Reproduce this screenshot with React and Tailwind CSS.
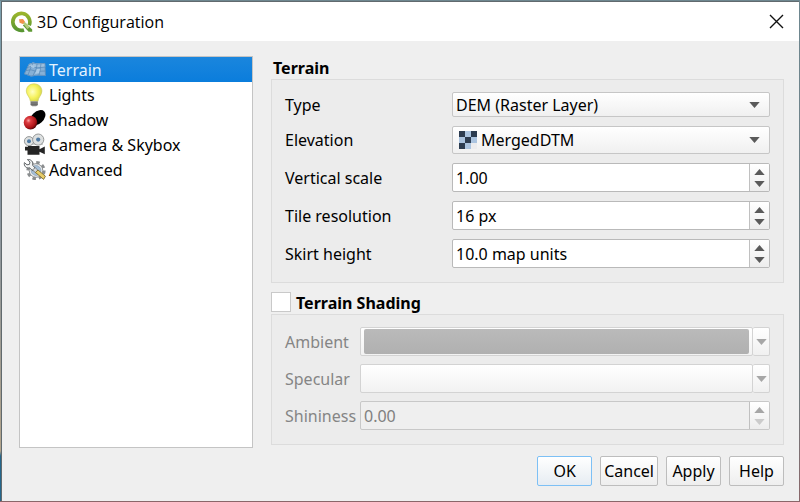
import React, { useState } from "react";

const FIELD =
  "rounded-[2px] border border-[#c6c6c6] bg-linear-to-b from-white to-[#f0f0f0]";

function QgisLogo() {
  return (
    <svg width="22" height="22" viewBox="0 0 22 22" aria-hidden="true">
      <defs>
        <linearGradient id="ring" x1="0" y1="0" x2="0" y2="1">
          <stop offset="0" stopColor="#9ab52c" />
          <stop offset="1" stopColor="#589632" />
        </linearGradient>
      </defs>
      <path
        d="M18.200 14.200 A8.500 8.500 0 1 0 13 19"
        fill="none"
        stroke="url(#ring)"
        strokeWidth="3.700"
      />
      <path d="M11.800 14.200 L15 12.600 L21.200 18.400 V20.800 H17.600 Z" fill="#5f9a35" />
      <path d="M11.800 12.200 L13.600 10.800 L18.800 16 L16.400 18 Z" fill="#b4cb7c" />
      <path d="M8 8.200 L12 8 L14 10.800 L11.800 13 L8.600 11.800 Z" fill="#f0924a" />
    </svg>
  );
}

function TerrainIcon() {
  return (
    <svg width="24" height="24" viewBox="0 0 24 24" aria-hidden="true">
      <path d="M6 6 L10 4.6 L14 5.4 L22 5 L22.6 18 L15 17.4 L8 18.6 L1 16 Z" fill="#86b0d6" />
      <path d="M6 6 L10 4.6 L14 5.4 L22 5 L22.3 9 L4.5 9 Z" fill="#9cc0de" />
      <path
        d="M6 6.4 L10 5 L14 6 L22 5.4 M4.4 9.4 L9 8.2 L14 10 L22 9 M2.8 12.6 L8 11.8 L13 13.4 L22.4 13 M1.4 15.8 L8 18 L15 17 L22.4 17.6 M10 5 L7 11.6 L5 17 M14 6 L13.5 10 L10 17.6 M18 5.6 L17 13 L16 17 M6 6.4 L1.4 15.8 M22 5.4 L22.4 17.6"
        fill="none"
        stroke="#5888b6"
        strokeWidth=".7"
      />
      <path d="M8 7 L12 8 L11 10 L8 9 Z M14 11 L17 11 L16 15 L12 16 Z" fill="#a9c9e5" />
    </svg>
  );
}

function BulbIcon() {
  return (
    <svg width="24" height="24" viewBox="0 0 24 24" aria-hidden="true">
      <defs>
        <radialGradient id="glass" cx=".4" cy=".45" r=".6">
          <stop offset="0" stopColor="#ffffc4" />
          <stop offset=".6" stopColor="#f6f25c" />
          <stop offset="1" stopColor="#d8d84c" />
        </radialGradient>
      </defs>
      <path
        d="M11 .8 C6.400 .8 3.300 4 3.300 8 C3.300 12 7 14 7.400 18.300 H15 C15.400 14 18.900 12 18.900 8 C18.900 4 15.600 .8 11 .8 Z"
        fill="url(#glass)"
        stroke="#c9c95e"
        strokeWidth=".6"
      />
      <path d="M7.600 18.300 H14.800 V22 L13.200 23.200 H9.200 L7.600 22 Z" fill="#8b8b88" />
      <path d="M7.600 20 H14.800 M7.600 21.700 H14.800" stroke="#555" strokeWidth=".7" />
    </svg>
  );
}

function ShadowIcon() {
  return (
    <svg width="24" height="24" viewBox="0 0 24 24" aria-hidden="true">
      <defs>
        <radialGradient id="ball" cx=".35" cy=".35" r=".7">
          <stop offset="0" stopColor="#f9a0a0" />
          <stop offset=".25" stopColor="#dc3c40" />
          <stop offset=".75" stopColor="#ae1519" />
          <stop offset="1" stopColor="#4e0507" />
        </radialGradient>
      </defs>
      <ellipse cx="14.500" cy="9.800" rx="9.300" ry="6" transform="rotate(-43 14.500 9.800)" fill="#000" />
      <circle cx="7.500" cy="14.600" r="6.800" fill="url(#ball)" />
    </svg>
  );
}

function CameraIcon() {
  return (
    <svg width="24" height="24" viewBox="0 0 24 24" aria-hidden="true">
      <path d="M3 10.500 L5 8 L10 7 L20 7 L20 12 H4 Z" fill="#cfd2d2" />
      <circle cx="6" cy="8.200" r="4.600" fill="#dde0e0" stroke="#8c8f8f" strokeWidth=".9" />
      <circle cx="15.200" cy="6.600" r="5.600" fill="#dde0e0" stroke="#8c8f8f" strokeWidth=".9" />
      <circle cx="6" cy="8.200" r="2" fill="#4f7ba5" />
      <circle cx="15.200" cy="6.600" r="2.100" fill="#4f7ba5" />
      <path d="M2 13.800 H5 V13 H16.500 V16.200 L21.800 13.600 V21.200 L16.500 18.800 V21.800 H4.500 V17.500 H2 Z" fill="#252525" />
    </svg>
  );
}

function ToolsIcon() {
  return (
    <svg width="24" height="24" viewBox="0 0 24 24" aria-hidden="true">
      <circle cx="13" cy="12.500" r="8" fill="none" stroke="#8a8d8f" strokeWidth="3.200" strokeDasharray="3.400 2.880" />
      <circle cx="13" cy="12.500" r="6.800" fill="#f4f5f5" stroke="#8b8e90" strokeWidth="1" />
      <circle cx="13" cy="12.500" r="5" fill="#a6c0d8" stroke="#8296aa" strokeWidth=".6" />
      <path
        d="M4.400 1.600 L7 4 L6.400 6.400 L4 6.800 L1.400 4.600 C.6 8 3.200 10.600 6.600 9.800 L10 13 L12.600 10.600 L9.600 7.200 C10.600 4 8 .9 4.400 1.600 Z"
        fill="#f3f4f4"
        stroke="#64686b"
        strokeWidth="1"
      />
      <path d="M9.400 11.800 L12.400 9.800 L15 12.400 L12.600 14.800 Z" fill="#d5d8da" stroke="#72767a" strokeWidth=".8" />
      <path d="M12.400 14.400 L15 12 L22.400 18.200 L20.600 21.400 Z" fill="#e8cd6a" stroke="#7e6c2c" strokeWidth=".9" />
    </svg>
  );
}

function RasterIcon() {
  return (
    <svg width="18" height="18" viewBox="0 0 3 3" shapeRendering="crispEdges" aria-hidden="true">
      <path d="M0 0H3V3H0Z" fill="#abc4e0" />
      <path d="M0 0H1V1H0Z M2 0H3V1H2Z M1 1H2V2H1Z M0 2H1V3H0Z" fill="#2c3c50" />
      <path d="M2 2H3V3H2Z" fill="#ececee" />
    </svg>
  );
}

function Arrow({ up = false, className = "text-[#5a5a5a]" }) {
  return (
    <svg width="11" height="6" viewBox="0 0 11 6" className={className} aria-hidden="true">
      <path d={up ? "M.3 6 L5.500 0 L10.700 6 Z" : "M.3 0 H10.700 L5.500 6 Z"} fill="currentColor" />
    </svg>
  );
}

function Row({ id, label, wide = false, disabled = false, children }) {
  return (
    <div className="flex items-center">
      <label
        htmlFor={id}
        className={`shrink-0 ${wide ? "w-[167px]" : "w-[75px]"} ${disabled ? "text-[#858585]" : ""}`}
      >
        {label}
      </label>
      <div className="min-w-0 flex-1">{children}</div>
    </div>
  );
}

function Combo({ id, option, icon, className }) {
  return (
    <div className="relative">
      <select
        id={id}
        className={`block w-full appearance-none outline-none ${FIELD} ${className}`}
      >
        <option>{option}</option>
      </select>
      {icon && (
        <span className="pointer-events-none absolute inset-y-0 left-[7px] flex items-center">{icon}</span>
      )}
      <span className="pointer-events-none absolute inset-y-0 right-[10px] flex items-center">
        <Arrow />
      </span>
    </div>
  );
}

function SpinBox({ id, initial, disabled = false }) {
  const [value, setValue] = useState(initial);
  return (
    <div
      className={`flex h-[29px] overflow-hidden rounded-[2px] border ${
        disabled ? "border-[#c8c8c8] bg-[#efefef]" : "border-[#b9b9b9] bg-white"
      }`}
    >
      <input
        id={id}
        type="text"
        value={value}
        disabled={disabled}
        onChange={(e) => setValue(e.target.value)}
        className="min-w-0 flex-1 bg-transparent px-[3px] outline-none disabled:text-[#808080]"
      />
      <div className="flex w-5 flex-col border-l border-[#c0c0c0] bg-linear-to-b from-white to-[#ededed]">
        <button type="button" disabled={disabled} aria-label="Increase" className="flex flex-1 items-end justify-center pb-[3px]">
          <Arrow up className={disabled ? "text-[#a6a6a6]" : "text-[#5a5a5a]"} />
        </button>
        <button type="button" disabled={disabled} aria-label="Decrease" className="flex flex-1 items-start justify-center pt-[3px]">
          <Arrow className={disabled ? "text-[#cbcbcb]" : "text-[#5a5a5a]"} />
        </button>
      </div>
    </div>
  );
}

function ColorButton({ id, color }) {
  return (
    <div className="flex h-[29px]">
      <button
        id={id}
        type="button"
        disabled
        className="min-w-0 flex-1 rounded-[2px] border border-[#d3d3d3] bg-linear-to-b from-white to-[#f2f2f2] py-px pr-[3px] pl-[3px]"
      >
        <span className={`block h-full rounded-[2px] ${color}`} />
      </button>
      <button
        type="button"
        disabled
        aria-label="Color options"
        className="flex w-[17px] items-center justify-center rounded-[2px] border border-l-0 border-[#d3d3d3] bg-linear-to-b from-white to-[#f0f0f0]"
      >
        <Arrow className="text-[#a6a6a6]" />
      </button>
    </div>
  );
}

const PAGES = [
  ["Terrain", TerrainIcon],
  ["Lights", BulbIcon],
  ["Shadow", ShadowIcon],
  ["Camera & Skybox", CameraIcon],
  ["Advanced", ToolsIcon],
];

const BUTTON =
  "h-[30px] min-w-[55px] rounded-[2px] border bg-linear-to-b from-white px-[3px] text-center";

export default function App() {
  const [page, setPage] = useState("Terrain");
  return (
    <div className="flex min-h-screen bg-[linear-gradient(to_bottom,#6e8790_0,#727b7e_80%,#8a6669_100%)] pt-px pr-px pb-px font-['Noto_Sans',sans-serif] text-[16px] leading-[22px] text-black">
      <div className="w-px bg-[linear-gradient(to_bottom,#7ba0ae_0%,#8794a0_40%,#b3a48b_90%,#25678c_91%,#25678c_100%)]" />
      <main className="flex min-w-0 flex-1 flex-col border-t border-l border-[#616a6e] bg-[#efefef]">
        <header className="flex h-[39px] items-center bg-white pr-[15px] pl-[9px] font-['Open_Sans',sans-serif]">
          <QgisLogo />
          <h1 className="ml-1 flex-1">3D Configuration</h1>
          <button type="button" aria-label="Close">
            <svg width="15" height="15" viewBox="0 0 15 15" aria-hidden="true">
              <path d="M1 1 L14 14 M14 1 L1 14" stroke="#111" strokeWidth="1.400" />
            </svg>
          </button>
        </header>

        <div className="flex flex-1 gap-[18px] pt-[15px] pr-[15px] pl-[17px]">
          <nav className="w-[234px] shrink-0 border border-[#c4c4c4] bg-white">
            <ul>
              {PAGES.map(([name, Icon]) => (
                <li key={name}>
                  <button
                    type="button"
                    onClick={() => setPage(name)}
                    className={`flex h-[25px] w-full items-center gap-0.5 pl-[3px] text-left ${
                      page === name ? "bg-linear-to-b from-[#1a86dd] to-[#0a7ddc] text-[#e4f3ff]" : ""
                    }`}
                  >
                    <Icon />
                    {name}
                  </button>
                </li>
              ))}
            </ul>
          </nav>

          <div className="min-w-0 flex-1 pb-[3px]">
            <section>
              <h2 className="h-[23px] pl-0.5 font-bold leading-[24px]">Terrain</h2>
              <div className="flex flex-col gap-[9px] border border-[#dcdcdc] bg-[#ececec] px-[13px] pt-3 pb-[14px]">
                <Row id="type" label="Type" wide>
                  <Combo id="type" option="DEM (Raster Layer)" className="h-[25px] pl-[3px]" />
                </Row>
                <Row id="elevation" label="Elevation" wide>
                  <Combo id="elevation" option="MergedDTM" icon={<RasterIcon />} className="h-7 pl-7" />
                </Row>
                <Row id="scale" label="Vertical scale" wide>
                  <SpinBox id="scale" initial="1.00" />
                </Row>
                <Row id="resolution" label="Tile resolution" wide>
                  <SpinBox id="resolution" initial="16 px" />
                </Row>
                <Row id="skirt" label="Skirt height" wide>
                  <SpinBox id="skirt" initial="10.0 map units" />
                </Row>
              </div>
            </section>

            <section className="mt-[9px]">
              <h2 className="flex h-[22px] items-start gap-[5px] font-bold">
                <input
                  id="shading"
                  type="checkbox"
                  className="size-5 appearance-none border border-[#c9c9c9] bg-white checked:bg-[#1a86dd]"
                />
                <label htmlFor="shading">Terrain Shading</label>
              </h2>
              <div className="flex flex-col gap-2 border border-[#dcdcdc] bg-[#ececec] px-[13px] pt-3 pb-[14px]">
                <Row id="ambient" label="Ambient" disabled>
                  <ColorButton id="ambient" color="bg-linear-to-b from-[#bababa] to-[#b0b0b0]" />
                </Row>
                <Row id="specular" label="Specular" disabled>
                  <ColorButton id="specular" color="bg-transparent" />
                </Row>
                <Row id="shininess" label="Shininess" disabled>
                  <SpinBox id="shininess" initial="0.00" disabled />
                </Row>
              </div>
            </section>
          </div>
        </div>

        <footer className="flex justify-end gap-2 pt-2 pr-[15px] pb-[15px]">
          <button type="button" className={`${BUTTON} border-[#7dc0f5] to-[#e6ecf2]`}>OK</button>
          <button type="button" className={`${BUTTON} border-[#bdbdbd] to-[#eeeeee]`}>Cancel</button>
          <button type="button" className={`${BUTTON} border-[#bdbdbd] to-[#eeeeee]`}>Apply</button>
          <button type="button" className={`${BUTTON} border-[#bdbdbd] to-[#eeeeee]`}>Help</button>
        </footer>
      </main>
    </div>
  );
}
